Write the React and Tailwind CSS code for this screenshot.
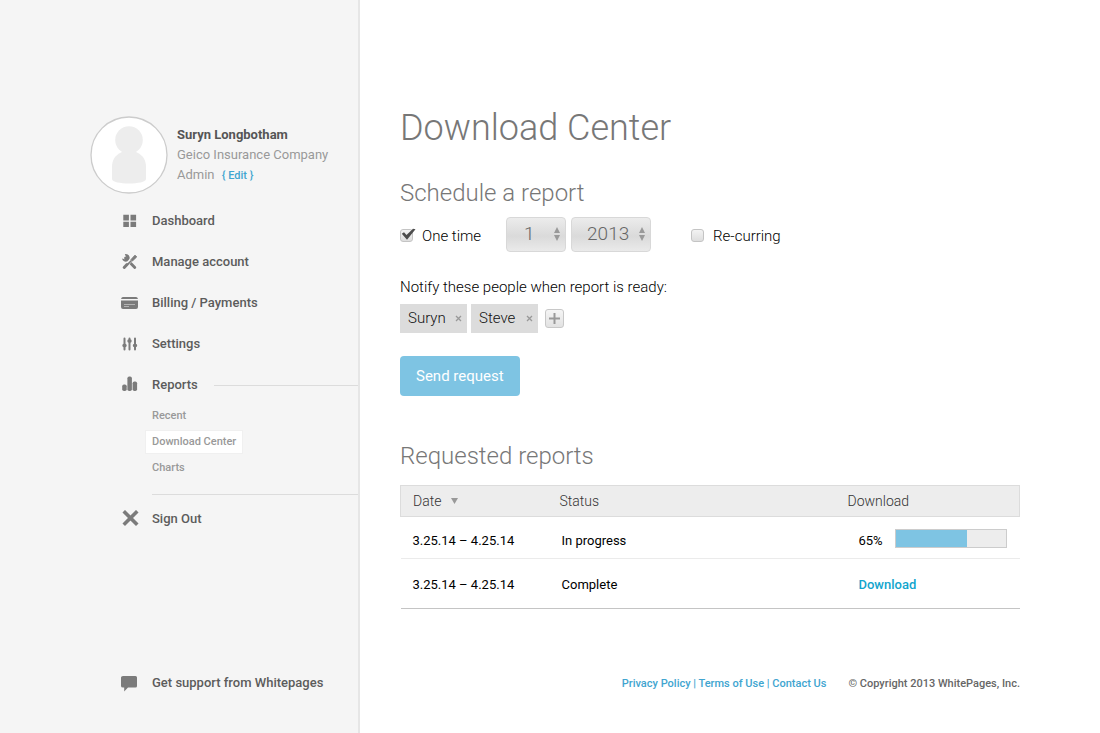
import { useState } from "react";

const DashboardIcon = () => (
  <svg width="20" height="18" viewBox="0 0 20 18" fill="#7b7b7b" aria-hidden="true">
    <path d="M3.300 2.800h5.600v5.600H3.300zM10.500 2.800h5.600v5.600h-5.600zM3.300 9.700h5.600v5.300H3.300zM10.500 9.700h5.600v5.300h-5.600z" />
  </svg>
);

const ToolsIcon = () => (
  <svg width="20" height="18" viewBox="0 0 20 18" aria-hidden="true">
    <path d="M5.500 5 14.800 14.500" stroke="#7b7b7b" strokeWidth="2.800" strokeLinecap="round" />
    <path d="M4.800 1.200a3.800 3.800 0 1 1-2.700 4.200l2.700 .9 1.600-1.800z" fill="#7b7b7b" />
    <path d="M11.600 6.600 3 15.200" stroke="#f5f5f5" strokeWidth="3.600" />
    <path d="M11.500 7.500 7.200 11.800" stroke="#7b7b7b" strokeWidth="1.700" />
    <path d="M11 6.600 15 2.200l1.700 1.700-4.300 4.100z" fill="#7b7b7b" stroke="#7b7b7b" strokeLinejoin="round" />
    <path d="M7 11.500 4.200 14.500" stroke="#7b7b7b" strokeWidth="3" strokeLinecap="round" />
  </svg>
);

const CardIcon = () => (
  <svg width="20" height="18" viewBox="0 0 20 18" fill="#7b7b7b" aria-hidden="true">
    <path d="M3 3h13q1.500 0 2 2H1q.5-2 2-2zM1 6.500h17v6.500q0 2-2 2H3q-2 0-2-2z" />
    <path d="M4 10.500h11M4 12.500h5" stroke="#b4b4b4" />
  </svg>
);

const SlidersIcon = () => (
  <svg width="20" height="18" viewBox="0 0 20 18" fill="none" stroke="#7b7b7b" strokeLinecap="round" aria-hidden="true">
    <path d="M4.500 3.500v11M9.500 3.500v11M15 3.500v11" strokeWidth="2" />
    <path d="M4 10.500h1M9 6h1M14.500 10.500h1" strokeWidth="3.400" />
  </svg>
);

const BarsIcon = () => (
  <svg width="20" height="18" viewBox="0 0 20 18" fill="#7b7b7b" aria-hidden="true">
    <rect x="2.200" y="8.500" width="4.500" height="6.500" rx="1.800" />
    <rect x="7.400" y="0.500" width="4.500" height="14.500" rx="1.800" />
    <rect x="12.600" y="5.500" width="4.500" height="9.500" rx="1.800" />
  </svg>
);

const CrossIcon = () => (
  <svg width="20" height="18" viewBox="0 0 20 18" aria-hidden="true">
    <path d="M5 2.500 16 13.500M16 2.500 5 13.500" stroke="#7b7b7b" strokeWidth="3.600" strokeLinecap="square" />
  </svg>
);

const ChatIcon = () => (
  <svg width="20" height="18" viewBox="0 0 20 18" fill="#7b7b7b" aria-hidden="true">
    <path d="M3 2h12.500q1.500 0 1.500 1.500v8.500q0 1.500-1.500 1.500H8L4.200 17.500V13.500H3q-2 0-2-1.500V3.500Q1 2 3 2z" />
  </svg>
);

const NAV = [
  { label: "Dashboard", Icon: DashboardIcon },
  { label: "Manage account", Icon: ToolsIcon },
  { label: "Billing / Payments", Icon: CardIcon },
  { label: "Settings", Icon: SlidersIcon },
];

function NavLink({ label, Icon }) {
  return (
    <a href="#" className="flex h-[26px] items-center gap-3 text-[13px] font-medium text-[#5c5c5c]">
      <Icon />
      {label}
    </a>
  );
}

function Sidebar() {
  return (
    <aside className="flex w-[360px] shrink-0 flex-col border-r-2 border-[#e6e6e6] bg-[#f5f5f5] pt-[116px] pb-[37px]">
      <div className="flex items-center gap-[9px] pl-[90px]">
        <svg width="78" height="78" viewBox="0 0 78 78" role="img" aria-label="Profile picture">
          <circle cx="39" cy="39" r="38" fill="#fff" stroke="#ccc" strokeWidth="1.300" />
          <circle cx="39" cy="24" r="13.800" fill="#ededed" />
          <path d="M32 36C25 39 22 44 22 51v12c0 6 34 6 34 0V51c0-7-3-12-10-15z" fill="#ededed" />
        </svg>
        <div className="text-[13px] leading-5 text-[#999]">
          <p className="font-bold text-[#555]">Suryn Longbotham</p>
          <p>Geico Insurance Company</p>
          <p>
            Admin <a href="#" className="ml-1 text-[11px] font-medium text-[#41a5d0]">{"{ Edit }"}</a>
          </p>
        </div>
      </div>

      <nav className="mt-[14px] flex flex-col">
        <div className="flex flex-col gap-[15px] pl-[120px]">
          {NAV.map((item) => (
            <NavLink key={item.label} {...item} />
          ))}
          <div className="flex items-center gap-4">
            <NavLink label="Reports" Icon={BarsIcon} />
            <div className="h-px flex-1 bg-[#dcdcdc]" />
          </div>
        </div>
        <ul className="mt-[5px] pl-[145px] text-[11px] font-medium text-[#999]">
          <li className="flex h-[26px] items-center"><a href="#" className="px-[7px]">Recent</a></li>
          <li className="flex h-[26px] items-center">
            <a href="#" aria-current="page" className="border border-[#f0f0f0] bg-white px-[6px] py-[3px] leading-4">Download Center</a>
          </li>
          <li className="flex h-[26px] items-center"><a href="#" className="px-[7px]">Charts</a></li>
        </ul>
        <div className="mt-[13px] ml-[152px] h-px bg-[#dcdcdc]" />
        <div className="mt-[11px] pl-[120px]">
          <NavLink label="Sign Out" Icon={CrossIcon} />
        </div>
      </nav>

      <div className="mt-auto pl-[120px]">
        <NavLink label="Get support from Whitepages" Icon={ChatIcon} />
      </div>
    </aside>
  );
}

function CheckField({ id, label, checked, onChange }) {
  return (
    <div className="flex items-center gap-[9px] pt-[2px]">
      <span className="relative flex">
        <input
          id={id}
          type="checkbox"
          checked={checked}
          onChange={onChange}
          className="size-[13px] appearance-none rounded-[3px] border border-[#c4c4c4] bg-linear-to-b from-[#f3f3f3] to-[#dedede]"
        />
        {checked && (
          <svg width="18" height="14" viewBox="0 0 18 14" className="pointer-events-none absolute -top-px left-0" aria-hidden="true">
            <path d="M1.800 5.800 4 4.300 6.500 7 13 .8l2.500 .4L7 11.800z" fill="#4c4c4c" />
          </svg>
        )}
      </span>
      <label htmlFor={id} className="pt-px text-[15px] font-light text-black">{label}</label>
    </div>
  );
}

function Picker({ label, options, value, className }) {
  return (
    <div className="relative">
      <select
        aria-label={label}
        defaultValue={value}
        className={`h-[35px] appearance-none rounded-[4px] border border-[#d8d8d8] bg-linear-to-b from-[#ececec] via-[#dadada] via-55% to-[#eaeaea] text-[19px] font-light text-[#666] ${className}`}
      >
        {options.map((o) => (
          <option key={o}>{o}</option>
        ))}
      </select>
      <svg width="8" height="14" viewBox="0 0 8 14" fill="#999" className="pointer-events-none absolute top-[10px] right-[5px]" aria-hidden="true">
        <path d="M4 0 7 6H1zM4 14 1 8h6z" />
      </svg>
    </div>
  );
}

function Tag({ name }) {
  return (
    <span className="flex h-[29px] min-w-[67px] items-center justify-between gap-2 bg-[#dcdcdc] pr-[5px] pl-2 text-[15px] font-light text-[#111]">
      {name}
      <button type="button" aria-label={`Remove ${name}`} className="flex">
        <svg width="7" height="7" viewBox="0 0 7 7" stroke="#999" strokeWidth="1.300" aria-hidden="true">
          <path d="M1 1l5 5M6 1 1 6" />
        </svg>
      </button>
    </span>
  );
}

function ScheduleForm() {
  const [once, setOnce] = useState(true);
  const [recurring, setRecurring] = useState(false);
  return (
    <form className="mt-2" onSubmit={(e) => e.preventDefault()}>
      <div className="flex items-center">
        <CheckField id="once" label="One time" checked={once} onChange={() => setOnce(!once)} />
        <div className="ml-[25px] flex gap-[5px]">
          <Picker label="Month" options={["1", "2", "3", "4", "5", "6"]} value="1" className="w-[60px] pl-[17px]" />
          <Picker label="Year" options={["2013", "2014"]} value="2013" className="w-20 pl-[15px]" />
        </div>
        <div className="ml-10">
          <CheckField id="recurring" label="Re-curring" checked={recurring} onChange={() => setRecurring(!recurring)} />
        </div>
      </div>
      <p className="mt-6 text-[15px] leading-[22px] font-light text-black">Notify these people when report is ready:</p>
      <div className="mt-[6px] flex items-center gap-1">
        <Tag name="Suryn" />
        <Tag name="Steve" />
        <button
          type="button"
          aria-label="Add person"
          className="ml-[3px] flex size-[19px] items-center justify-center rounded-[3px] border border-[#c8c8c8] bg-linear-to-b from-[#f5f5f5] to-[#e2e2e2]"
        >
          <svg width="11" height="11" viewBox="0 0 11 11" stroke="#999" strokeWidth="2" aria-hidden="true">
            <path d="M5.500 0v11M0 5.500h11" />
          </svg>
        </button>
      </div>
      <button type="submit" className="mt-[23px] h-10 rounded-[4px] bg-[#7ec4e3] px-4 text-[15px] text-white">
        Send request
      </button>
    </form>
  );
}

function ReportsTable() {
  return (
    <table className="mt-[13px] w-full table-fixed border-collapse text-left text-[13px] text-black">
      <colgroup>
        <col className="w-[148px]" />
        <col />
        <col className="w-[184px]" />
      </colgroup>
      <thead>
        <tr className="h-[31px] border border-[#dcdcdc] bg-[#ededed] text-[14px] text-[#333]">
          <th className="pl-3 font-light">
            <span className="flex items-center gap-[10px]">
              Date
              <svg width="7" height="6" viewBox="0 0 7 6" fill="#999" aria-hidden="true">
                <path d="M0 0h7L3.500 6z" />
              </svg>
            </span>
          </th>
          <th className="pl-[11px] font-light">Status</th>
          <th className="pl-3 font-light">Download</th>
        </tr>
      </thead>
      <tbody>
        <tr className="h-[42px] border-b border-[#ebebeb]">
          <td className="pt-[7px] pl-3">3.25.14 – 4.25.14</td>
          <td className="pt-[7px] pl-[13px]">In progress</td>
          <td className="pt-[2px] pl-[23px]">
            <div className="flex items-center gap-3">
              <span className="pt-[5px]">65%</span>
              <div
                role="progressbar"
                aria-label="Report progress"
                aria-valuenow={65}
                className="h-[19px] w-28 border border-[#ccc] bg-[#ededed]"
              >
                <div className="h-full bg-[#7ec4e3]" style={{ width: "65%" }} />
              </div>
            </div>
          </td>
        </tr>
        <tr className="h-[50px] border-b border-[#c4c4c4]">
          <td className="pt-[2px] pl-3">3.25.14 – 4.25.14</td>
          <td className="pt-[2px] pl-[13px]">Complete</td>
          <td className="pt-[2px] pl-[23px]"><a href="#" className="font-medium text-[#12a5cd]">Download</a></td>
        </tr>
      </tbody>
    </table>
  );
}

export default function App() {
  return (
    <div className="flex min-h-screen bg-white font-['Roboto',sans-serif]">
      <Sidebar />
      <div className="flex min-w-0 flex-1 flex-col pt-[105px] pr-20 pb-[37px] pl-10">
        <main>
          <h1 className="text-[36px] leading-[46px] font-light text-[#777]">Download Center</h1>
          <h2 className="mt-[26px] text-[24px] leading-8 font-light text-[#777]">Schedule a report</h2>
          <ScheduleForm />
          <h2 className="mt-11 text-[24px] leading-8 font-light text-[#777]">Requested reports</h2>
          <ReportsTable />
        </main>
        <footer className="mt-auto flex items-center justify-end gap-[22px] text-[11px] leading-6 font-medium text-[#666]">
          <nav className="text-[#41a5d0]">
            <a href="#">Privacy Policy</a> | <a href="#">Terms of Use</a> | <a href="#">Contact Us</a>
          </nav>
          <p>© Copyright 2013 WhitePages, Inc.</p>
        </footer>
      </div>
    </div>
  );
}
